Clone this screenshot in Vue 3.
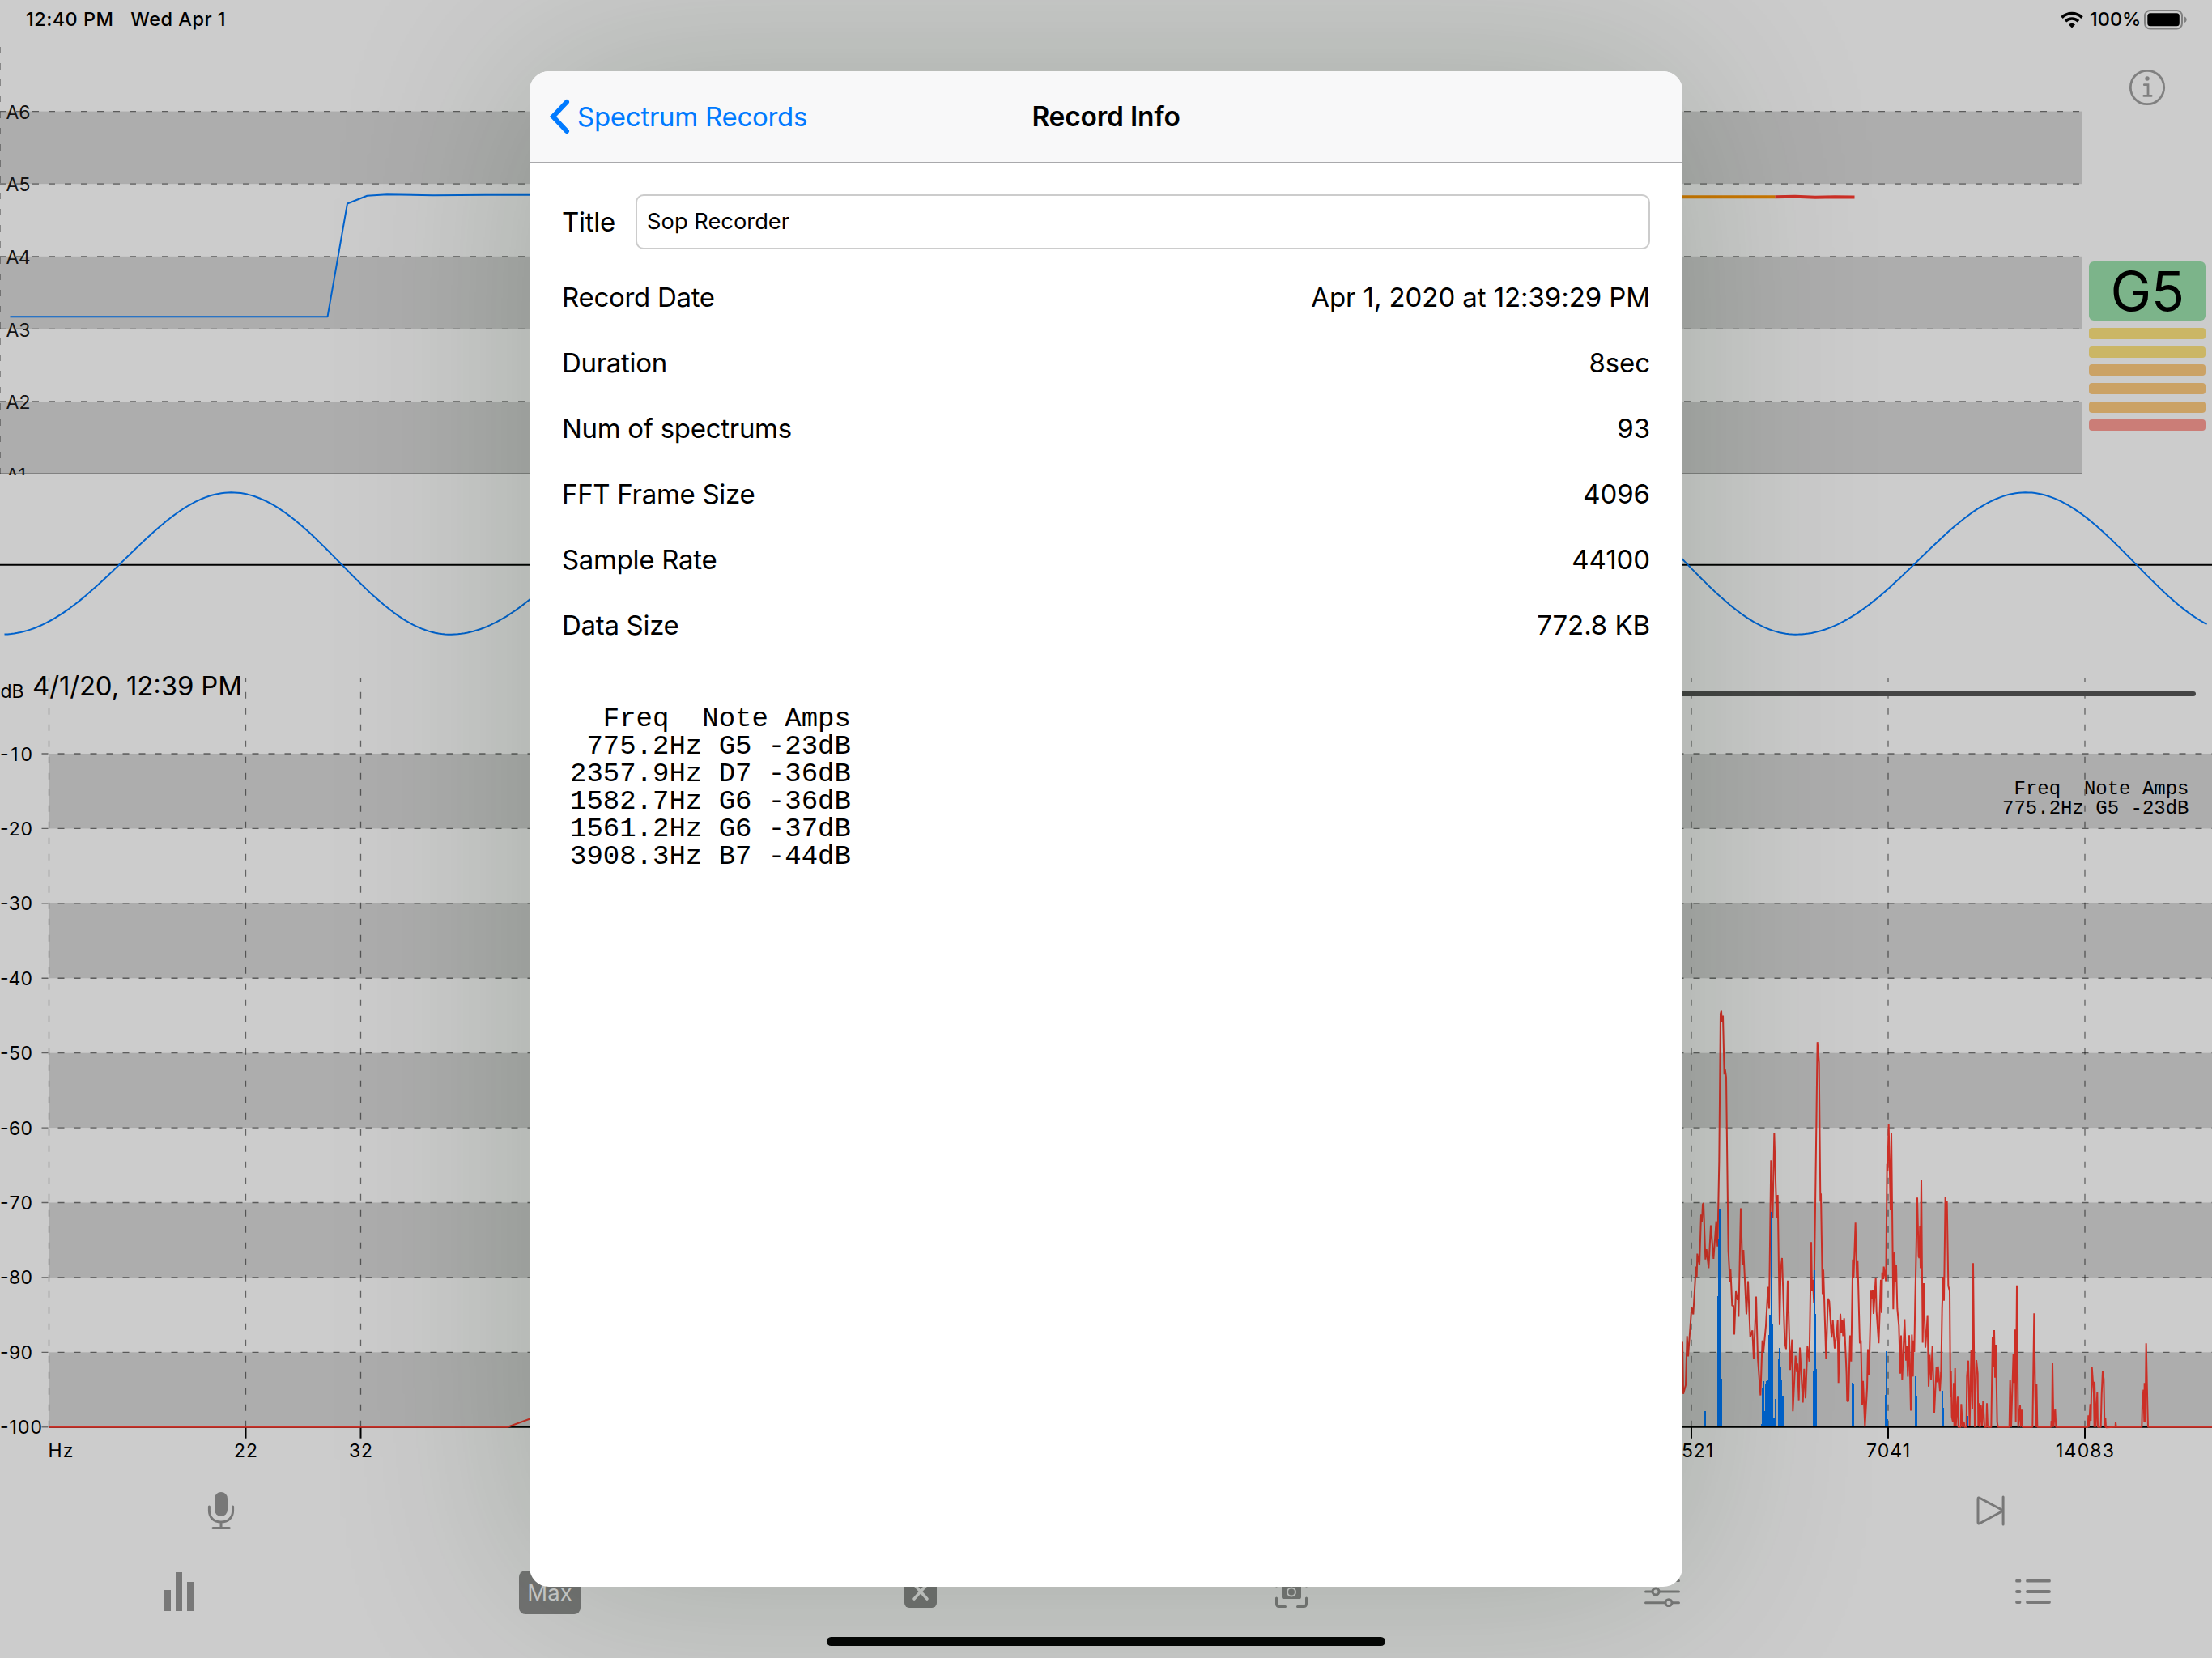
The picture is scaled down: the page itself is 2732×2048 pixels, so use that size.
<template>
  <div class="screen">
    <header class="status-bar">
      <div class="status-left">
        <span class="time">12:40 PM</span>
        <span class="date">Wed Apr 1</span>
      </div>
      <div class="status-right">
        <svg class="wifi" width="28" height="21" viewBox="0 0 28 21">
          <path d="M1.5 7.6a18 18 0 0 1 25 0" />
          <path d="M6 12.2a11.6 11.6 0 0 1 16 0" />
          <path class="dot" d="M14 20.6l-4-4.2a5.8 5.8 0 0 1 8 0z" />
        </svg>
        <span class="percent">100%</span>
        <svg class="battery" width="54" height="25" viewBox="0 0 54 25">
          <rect x="1" y="1" width="46" height="22.5" rx="6.5" class="shell" />
          <rect x="4.3" y="4.3" width="39.5" height="16" rx="3.5" />
          <path d="M49.6 8.2q3 1.2 3 4t-3 4z" class="nub" />
        </svg>
      </div>
    </header>

    <section class="pitch">
      <svg width="2572" height="529" viewBox="0 58 2572 529">
        <rect v-for="y in [137.6, 316.8, 496]" :key="y" x="0" :y="y" width="2572" height="89.6" class="band" />
        <g class="grid">
          <line v-for="n in octaves" :key="n.label" x1="0" x2="2572" :y1="n.y" :y2="n.y" />
          <line x1="0" x2="0" y1="58" y2="585" />
        </g>
        <line x1="0" x2="2572" y1="585.3" y2="585.3" class="base thin" />
        <text v-for="n in octaves" :key="n.label" x="7.5" :y="n.y + 9.2" textLength="30" class="axis soft">{{ n.label }}</text>
        <text x="7.5" y="594.5" class="axis soft">A1</text>
        <path class="blue-line" d="M12.5 391.3H404.5L429 251.5L453.5 241.7L478 240.2L535 241.3L600 240.8H700" />
        <path class="orange-line" d="M2000 243.3H2192.5" />
        <path class="red-thick" d="M2192.5 243.3L2217 242.8L2242 243.7L2266 243.3L2290.5 243.6" />
      </svg>
      <aside class="side">
        <svg class="info" width="46" height="46" viewBox="0 0 46 46">
          <circle cx="23" cy="23" r="20.7" />
          <circle cx="23" cy="12" r="2.7" class="fill" />
          <path d="M19.3 19.7H24V33.2M18.8 33.4H28.2" />
        </svg>
        <div class="note">G5</div>
        <div v-for="(c, i) in levels" :key="i" class="level" :class="c"></div>
      </aside>
    </section>

    <section class="wave">
      <svg width="2732" height="233" viewBox="0 587 2732 233">
        <line x1="0" x2="2732" y1="697.8" y2="697.8" class="base" />
        <path class="blue-line" :d="wavePath" />
      </svg>
    </section>

    <section class="spectrum">
      <svg width="2732" height="990" viewBox="0 820 2732 990">
        <rect v-for="n in [1, 3, 5, 7, 9]" :key="n" x="60.5" :y="dbY(n)" width="2672" height="92.42" class="band" />
        <g class="grid">
          <line v-for="n in 9" :key="n" x1="51.5" x2="2732" :y1="dbY(n)" :y2="dbY(n)" />
          <line x1="51.5" x2="60" :y1="dbY(10)" :y2="dbY(10)" />
          <line v-for="x in columns" :key="x" :x1="x" :x2="x" y1="838" y2="1762" stroke-dashoffset="3.3" />
        </g>
        <line x1="60.5" x2="2732" y1="1762.7" y2="1762.7" class="base" />
        <line v-for="x in columns.slice(1)" :key="x" :x1="x" :x2="x" y1="1763" y2="1776.7" class="base" />

        <text v-for="n in 10" :key="n" x="0" :y="dbY(n) + 8.5" :textLength="n === 10 ? 52 : 40" class="axis">-{{ n * 10 }}</text>
        <text x="0.5" y="861.7" textLength="29" class="axis">dB</text>
        <text x="40" y="859" textLength="259" class="stamp">4/1/20, 12:39 PM</text>
        <text x="59.5" y="1799.5" textLength="31" class="axis">Hz</text>
        <text v-for="t in ticks" :key="t.x" :x="t.x" y="1799.5" :textLength="t.w" class="axis mid">{{ t.text }}</text>

        <line x1="700" x2="2709" y1="857" y2="857" class="peak-line" />

        <path class="red-line" d="M60.5 1762.7H627L660 1750.5" />
        <g transform="translate(2070 1220) scale(.33333 .35714)">
          <polyline :points="highPeaks" class="red-line" />
          <rect v-for="b in bars" :key="b[0]" :x="b[0]" :y="b[2]" :width="b[1] - b[0]" :height="1519 - b[2]" class="bar" />
        </g>
        <g transform="translate(2330 1340) scale(.33333)">
          <rect v-for="b in tailBars" :key="b[0]" :x="b[0]" :y="b[2]" :width="b[1] - b[0]" :height="1267 - b[2]" class="bar" />
          <polyline :points="tailPeaks" class="red-line" />
        </g>

        <text x="2487.5" y="981" textLength="216" class="mono">Freq&nbsp;&nbsp;Note Amps</text>
        <text x="2473" y="1004.5" textLength="230.5" class="mono">775.2Hz G5 -23dB</text>
      </svg>
    </section>

    <nav class="transport">
      <svg width="34" height="48" viewBox="256 1842 34 48" class="icon">
        <rect x="265" y="1843" width="16" height="30" rx="8" class="fill" />
        <path d="M258.4 1861V1866C258.4 1875 264.5 1880 273 1880S287.6 1875 287.6 1866V1861M273 1880V1887M263 1887.5H283.3" />
      </svg>
      <svg width="36" height="40" viewBox="2440.5 1846 36 40" class="icon">
        <path d="M2443.5 1851.5Q2443.5 1849 2446 1850.5L2472 1864.5Q2473.5 1866 2472 1867.5L2446 1881.5Q2443.5 1883 2443.5 1880.5ZM2474.6 1849V1883" />
      </svg>
    </nav>

    <nav class="tabs">
      <div>
        <svg width="36" height="48" viewBox="0 0 36 48" class="icon">
          <path class="fill" d="M0 22h8v26h-8zM14 0h8v48h-8zM28 12h8v36h-8z" />
        </svg>
      </div>
      <div><span class="max">Max</span></div>
      <div>
        <svg width="40" height="40" viewBox="0 0 40 40">
          <rect width="40" height="40" rx="6" class="chip" />
          <path d="M12 11L28 29M28 11L12 29" class="cross" />
        </svg>
      </div>
      <div>
        <svg width="40" height="40" viewBox="0 0 40 40" class="icon">
          <path d="M1.5 13V5Q1.5 1.5 5 1.5H13M27 1.5H35Q38.5 1.5 38.5 5V13M38.5 28V35Q38.5 38.5 35 38.5H27.5M12.5 38.5H5Q1.5 38.5 1.5 35V28" />
          <path class="fill" d="M10 11H14L16 8H24L26 11H30Q32 11 32 13V27Q32 29 30 29H10Q8 29 8 27V13Q8 11 10 11Z" />
          <circle cx="20" cy="20.5" r="5" class="lens" />
        </svg>
      </div>
      <div>
        <svg width="44" height="38" viewBox="0 0 44 38" class="icon">
          <path d="M1.5 5.5H42.5M1.5 19H9.5M18.5 19H42.5M1.5 32.7H25.5M34.5 32.7H42.5" />
          <circle cx="14" cy="19" r="4" />
          <circle cx="30" cy="32.7" r="4" />
        </svg>
      </div>
      <div>
        <svg width="44" height="38" viewBox="0 0 44 38" class="icon thick">
          <path d="M2 5.7H5.5M2 19H5.5M2 32H5.5M15 5.7H42M15 19H42M15 32H42" />
        </svg>
      </div>
    </nav>
    <div class="home"></div>

    <div class="overlay">
      <div class="sheet">
        <div class="nav-bar">
          <button class="back">
            <svg width="26" height="44" viewBox="0 0 26 44"><path d="M22 4L5 22L22 40" /></svg>
            <span>Spectrum Records</span>
          </button>
          <h1>Record Info</h1>
        </div>
        <div class="body">
          <div class="title-row">
            <label>Title</label>
            <input v-model="title" type="text" />
          </div>
          <div v-for="row in rows" :key="row.label" class="row">
            <span>{{ row.label }}</span>
            <span class="value">{{ row.value }}</span>
          </div>
          <pre class="peaks">{{ peaks }}</pre>
        </div>
      </div>
    </div>
  </div>
</template>

<script setup>
import { ref } from 'vue'

const title = ref('Sop Recorder')

const rows = [
  { label: 'Record Date', value: 'Apr 1, 2020 at 12:39:29 PM' },
  { label: 'Duration', value: '8sec' },
  { label: 'Num of spectrums', value: '93' },
  { label: 'FFT Frame Size', value: '4096' },
  { label: 'Sample Rate', value: '44100' },
  { label: 'Data Size', value: '772.8 KB' }
]

const peaks = [
  '  Freq  Note Amps',
  ' 775.2Hz G5 -23dB',
  '2357.9Hz D7 -36dB',
  '1582.7Hz G6 -36dB',
  '1561.2Hz G6 -37dB',
  '3908.3Hz B7 -44dB'
].join('\n')

const octaves = ['A6', 'A5', 'A4', 'A3', 'A2'].map((label, i) => ({ label, y: 137.6 + i * 89.6 }))
const levels = ['yellow', 'yellow', 'orange', 'orange', 'orange', 'red']

const columns = [60.5, 303.5, 445.5, 2089, 2332, 2575]
const ticks = [
  { x: 303.5, text: '22', w: 29 },
  { x: 445.5, text: '32', w: 29 },
  { x: 2089, text: '3521', w: 54 },
  { x: 2332, text: '7041', w: 54 },
  { x: 2575, text: '14083', w: 72 }
]

function dbY(n) {
  return 931 + (n - 1) * 92.42
}

// the rising half of a cycle is a bit longer than the falling one
function buildWave() {
  const points = []
  for (let x = 5.5; x <= 2727; x += 4) {
    const p = (x - 1.7) % 554.1
    let y
    if (p < 284) {
      const t = p / 284
      y = 696 + 87.7 * Math.cos(Math.PI * (t - 0.018 * Math.sin(Math.PI * t)))
    } else {
      y = 696 - 87.7 * Math.cos((Math.PI * (p - 284)) / 270.1)
    }
    points.push(`${x.toFixed(1)} ${y.toFixed(1)}`)
  }
  return 'M' + points.join('L')
}
const wavePath = buildWave()

const highPeaks =
  '10,1300 24,1225 27,1405 36,1375 41,1205 45,1275 58,1105 64,1130 74,965 77,1000 79,920 87,960 93,785 96,810 99,750 102,745 109,940 113,905 121,970 129,822 139,938 149,808 154,895 160,600 165,90 168,80 170,120 174,97 179,300 182,283 186,310 194,910 200,1018 202,972 208,1100 213,1100 216,1200 222,1050 228,1080 230,1062 232,1138 240,763 246,960 250,907 261,1130 267,1015 275,1208 283,1185 288,1285 297,1068 303,1280 313,1410 320,1220 324,1260 333,1170 341,1035 345,1110 352,597 358,797 364,503 373,795 377,717 384,1167 388,975 393,935 403,1227 408,1250 414,1013 423,1322 430,1217 433,1465 443,1273 448,1330 450,1300 455,1427 459,1245 470,1435 475,1318 480,1420 487,1240 494,1293 501,880 504,1050 507,1010 511,1090 516,760 524,188 530,260 535,740 537,712 543,1060 546,975 556,1285 563,1075 568,1085 575,1190 577,1210 581,1148 588,1248 596,1190 599,1150 602,1367 609,1128 613,1195 616,1150 619,1205 623,1143 632,1340 634,1430 639,1430 645,1203 649,1293 655,940 658,1005 665,813 670,1005 673,943 681,1230 685,1220 690,1445 693,1360 700,1518 708,1385 711,1250 715,1340 723,1048 727,1075 729,1045 732,1128 740,1003 743,1120 751,1230 759,1010 762,1125 764,985 768,1008 770,965 778,1015 782,610 784,635 788,473 795,770 798,503 805,1112 809,915 813,1018 816,960 820,1110 826,1170 831,1335 834,1203 838,1358 847,1147 852,1290 855,1240 859,1345 864,1202 870,1463 874,1200 878,1345 880,1220 883,1260 886,1090 891,860 894,726 899,930 902,935 904,825 906,970 909,664 914,1228 918,1022 924,1245 929,1180 932,1133 936,1380 940,1270 945,1355 950,1240 957,1470 965,1312 968,1365 971,1310 978,1395 982,1330'

const tailPeaks =
  '202,1080 206,830 210,711 213,800 218,414 221,497 224,432 229,745 234,765 237,1155 239,1060 242,1230 246,1250 249,1105 251,1265 254,1050 257,1265 264,1153 266,1268 275,1268 277,1183 282,1268 287,1248 289,1268 296,1268 298,1080 303,1022 308,1265 314,983 318,1200 321,661 327,1268 333,1020 338,1070 340,1265 342,1180 346,1268 350,1188 354,1265 358,1170 363,1268 370,1268 372,1180 375,1268 388,1268 393,935 396,1045 399,909 402,1085 405,963 410,1250 413,1268 455,1268 458,1092 462,1268 470,998 473,1105 476,907 479,1250 483,743 488,1268 495,1185 497,1268 501,1204 504,1268 541,1268 547,847 551,1150 554,1268 556,1108 559,1268 610,1268 611,1245 613,1268 615,1031 619,1268 625,1200 628,1268 746,1268 748,1225 750,1268 755,1183 757,1245 761,1044 768,1145 770,1268 771,1100 775,1268 781,1137 783,1268 794,1268 797,1150 801,1061 805,1090 808,1268 811,1235 813,1270 848,1268 849,1250 851,1268 946,1268 948,1183 952,1130 955,1250 956,1105 959,1250 962,958 967,1190 969,1268 1206,1268'

// [left, right, top]
const bars = [
  [102, 105, 1510], [105, 110, 1465],
  [153, 156, 1068], [156, 160, 870], [160, 164, 767], [164, 167, 970], [167, 170, 1352],
  [316, 319, 1510], [319, 321, 1387], [321, 326, 1360], [326, 330, 1465], [330, 334, 1368],
  [334, 338, 1360], [338, 343, 1355], [343, 346, 1200], [346, 350, 1130], [350, 356, 775],
  [356, 359, 1165], [359, 366, 1490], [366, 371, 1422], [378, 381, 1285], [381, 386, 1245],
  [386, 389, 1312], [389, 393, 1355], [393, 398, 1412], [398, 401, 1497],
  [508, 511, 1327], [511, 517, 977], [517, 519, 1128], [519, 522, 1320],
  [652, 656, 1367], [656, 659, 1372],
  [774, 776, 1408], [776, 780, 1257], [780, 782, 1330], [782, 785, 1492],
  [885, 887, 1345], [887, 890, 1167], [890, 892, 1233], [892, 895, 1412]
]
const tailBars = [[206, 211, 1133], [211, 213, 1197], [300, 303, 1227]]
</script>

<style>
body {
  margin: 0;
  overflow: hidden;
}
</style>

<style scoped>
.screen {
  position: relative;
  display: flex;
  flex-direction: column;
  width: 2732px;
  height: 2048px;
  overflow: hidden;
  background: #ccc;
  color: #000;
  font-family: Inter, Roboto, sans-serif;
}

svg {
  display: block;
  flex: none;
}

.status-bar {
  display: flex;
  justify-content: space-between;
  height: 58px;
  padding: 0 30px 0 32px;
  box-sizing: border-box;
  font-size: 23.5px;
  font-weight: 500;
  line-height: 48px;
}

.status-left,
.status-right {
  display: flex;
}

.status-left {
  gap: 21px;
}

.time {
  letter-spacing: 0.45px;
}

.date {
  letter-spacing: 0.5px;
}

.status-right {
  align-items: center;
  height: 48px;
}

.wifi {
  margin-right: 8px;
}

.wifi path {
  fill: none;
  stroke: #000;
  stroke-width: 3.6;
}

.wifi .dot {
  fill: #000;
  stroke: none;
}

.percent {
  width: 67px;
}

.battery .shell {
  fill: none;
  stroke: #808080;
  stroke-width: 2;
}

.battery .nub {
  fill: #808080;
}

.pitch {
  display: flex;
  height: 529px;
}

.band {
  fill: #adadad;
}

.grid line {
  stroke: #000;
  stroke-opacity: 0.52;
  stroke-width: 1.3;
  stroke-dasharray: 8 12;
}

.base {
  stroke: #000;
  stroke-width: 2;
}

.base.thin {
  stroke-width: 1.3;
}

.axis {
  font-size: 23px;
}

.axis.soft {
  fill: #141414;
}

.axis.mid {
  text-anchor: middle;
}

.stamp {
  font-size: 33px;
}

.mono {
  font-family: "Courier New", "Liberation Mono", monospace;
  font-size: 24px;
}

.blue-line,
.red-line,
.red-thick,
.orange-line {
  fill: none;
  stroke-width: 2;
  stroke-linejoin: bevel;
  vector-effect: non-scaling-stroke;
}

.blue-line {
  stroke: #0062cc;
}

.red-line {
  stroke: #cc2f26;
}

.red-thick {
  stroke: #cc2f26;
  stroke-width: 4;
}

.orange-line {
  stroke: #cc7700;
  stroke-width: 4;
}

.peak-line {
  stroke: #444;
  stroke-width: 6;
  stroke-linecap: round;
}

.bar {
  fill: #0062cc;
  shape-rendering: crispEdges;
}

.side {
  display: flex;
  flex-direction: column;
  align-items: center;
  width: 160px;
}

.info {
  margin-top: 27px;
}

.info circle,
.info path {
  fill: none;
  stroke: #808080;
  stroke-width: 2.8;
  stroke-linecap: round;
}

.info .fill {
  fill: #808080;
  stroke: none;
}

.note {
  width: 144px;
  height: 73px;
  margin: 192px 0 9px;
  border-radius: 6px;
  background: #7cb48a;
  font-size: 68px;
  line-height: 73px;
  letter-spacing: -0.5px;
  text-align: center;
}

.level {
  width: 144px;
  height: 14px;
  margin-bottom: 8.7px;
  border-radius: 4px;
}

.level.yellow {
  background: #cbb665;
}

.level.orange {
  background: #cba265;
}

.level.red {
  background: #cb7d77;
}

.transport {
  display: flex;
  align-items: center;
  justify-content: space-between;
  height: 112px;
  padding: 0 256px;
}

.icon path,
.icon circle {
  fill: none;
  stroke: #787878;
  stroke-width: 3;
  stroke-linecap: round;
  stroke-linejoin: round;
}

.icon.thick path {
  stroke-width: 3.8;
}

.icon .fill {
  fill: #787878;
  stroke: none;
}

.icon .lens {
  stroke: #ccc;
  stroke-width: 2;
}

.tabs {
  display: grid;
  grid-template-columns: repeat(6, 458px);
  align-items: center;
  justify-items: center;
  height: 88px;
  margin: 0 -8px;
}

.max {
  display: block;
  width: 76px;
  height: 54px;
  margin-top: 2px;
  border-radius: 8px;
  background: #737373;
  color: #ccc;
  font-size: 27.5px;
  line-height: 55px;
  text-align: center;
}

.chip {
  fill: #737373;
}

.cross {
  stroke: #ccc;
  stroke-width: 3.6;
  stroke-linecap: round;
}

.home {
  width: 690px;
  height: 11px;
  margin: 12px auto 0;
  border-radius: 6px;
  background: #060606;
}

.overlay {
  position: absolute;
  inset: 0;
  display: flex;
  align-items: center;
  justify-content: center;
}

.sheet {
  width: 1424px;
  height: 1872px;
  border-radius: 24px;
  background: #fff;
  box-shadow: 0 0 250px rgba(10, 40, 0, 0.2);
}

.nav-bar {
  display: grid;
  grid-template-columns: 1fr auto 1fr;
  align-items: center;
  height: 113px;
  box-sizing: border-box;
  border-bottom: 1px solid #a9a9ac;
  border-radius: 24px 24px 0 0;
  background: #f8f8f9;
}

.back {
  display: flex;
  align-items: center;
  margin: 0;
  padding: 0 0 0 24px;
  border: 0;
  background: none;
  color: #007aff;
  font-family: inherit;
  font-size: 33px;
  letter-spacing: -0.27px;
}

.back svg {
  margin-right: 9px;
}

.back path {
  fill: none;
  stroke: #007aff;
  stroke-width: 6;
  stroke-linecap: round;
}

h1 {
  margin: 0;
  font-size: 33.5px;
  font-weight: 600;
  letter-spacing: -0.2px;
}

.body {
  padding: 39px 40px 0;
  font-size: 33px;
  letter-spacing: -0.3px;
}

.title-row {
  display: flex;
  align-items: center;
  justify-content: space-between;
  height: 68px;
  margin-bottom: 18px;
}

input {
  width: 1253px;
  height: 68px;
  box-sizing: border-box;
  padding: 0 12px 2px;
  border: 2px solid #ccc;
  border-radius: 10px;
  background: #fff;
  color: #000;
  font-family: inherit;
  font-size: 27.3px;
}

.row {
  display: flex;
  align-items: center;
  justify-content: space-between;
  height: 81px;
}

.value {
  letter-spacing: -0.08px;
}

.peaks {
  margin: 59px 0 0 10px;
  font-family: "Courier New", "Liberation Mono", monospace;
  font-size: 34px;
  line-height: 34px;
  letter-spacing: 0;
}
</style>
